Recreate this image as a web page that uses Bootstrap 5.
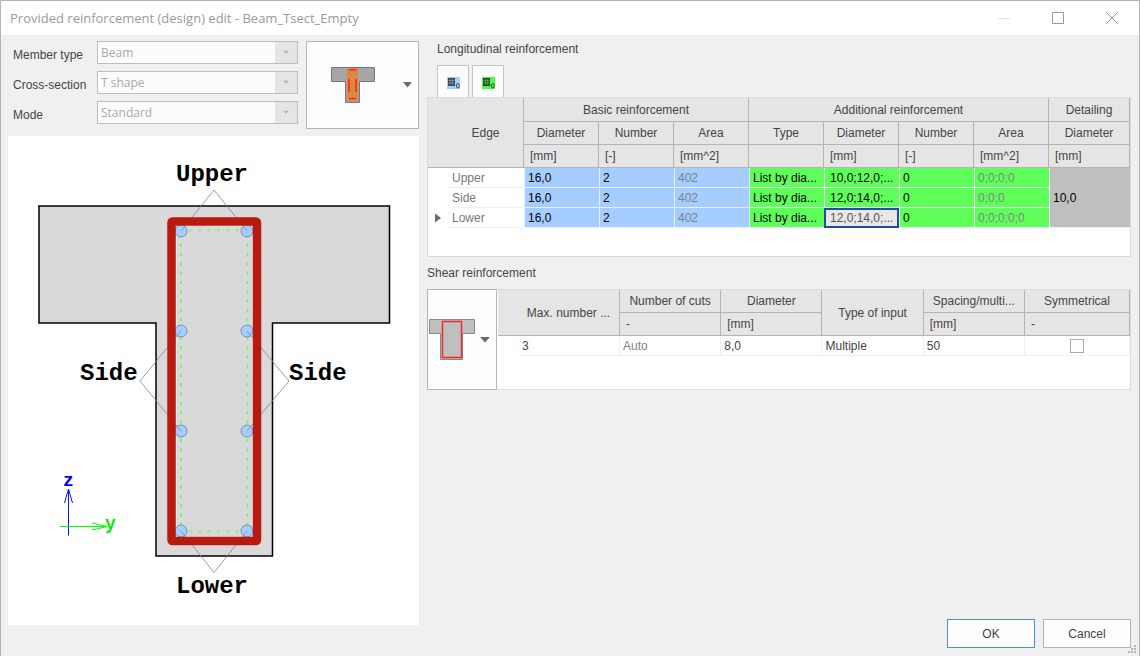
<!DOCTYPE html>
<html lang="en">
<head>
<meta charset="utf-8">
<meta name="viewport" content="width=device-width, initial-scale=1">
<title>Provided reinforcement (design) edit</title>
<link href="https://cdn.jsdelivr.net/npm/bootstrap@5.3.0/dist/css/bootstrap.min.css" rel="stylesheet">
<style>
  body { font: 12px/16px "Liberation Sans", Arial, sans-serif; color: #454545; background: #f0f0f0; }
  .dialog-window { border: 1px solid #b4b4b4; border-bottom: 0; }
  .title-bar { height: 34px; padding-left: 9px; padding-right: 20px; color: #9a9a9a; }
  .title-bar h1 { font: 13px/18px "Open Sans", sans-serif; }
  .caption-buttons { gap: 40px; }
  .caption-buttons button { border: 0; padding: 0; background: none; line-height: 0; }
  .dialog-body { display: grid; grid-template-columns: minmax(0, 411fr) minmax(0, 704fr); gap: 8px; padding: 6px 8px 8px 7px; }
  .settings-fields { display: grid; grid-template-columns: 85px minmax(0, 1fr); row-gap: 7px; align-content: start; }
  .settings-fields label { padding: 6px 0 0 5px; white-space: nowrap; }
  .combo { height: 23px; padding: 0 24px 0 3px; border: 1px solid #bdbdbd; border-radius: 0; color: #a9a9a9;
    font: 12px/20px "Open Sans", sans-serif;
    background: #fcfcfc url("data:image/svg+xml,%3Csvg xmlns='http://www.w3.org/2000/svg' viewBox='0 0 22 22'%3E%3Cpath fill='%23e5e5e5' d='M0 0h22v22H0z'/%3E%3Cpath fill='%23b5b5b5' d='M8 9h6l-3 3z'/%3E%3C/svg%3E") no-repeat right 0 center / 22px 22px; }
  .combo:disabled { background-color: #fcfcfc; opacity: 1; }
  .picture-btn { border: 1px solid #b4b4b4; background: #fdfdfd; border-radius: 0; }
  .shape-btn { width: 113px; height: 88px; gap: 25px; padding: 0 5px 0 20px; }
  .stirrup-btn { width: 70px; height: 101px; gap: 4px; padding: 0 5px 0 1px; }
  .canvas { background: #fff; margin-top: 7px; }
  .canvas text { font-family: "Liberation Mono", "Courier New", monospace; font-weight: bold; font-size: 24px; }
  .canvas .axis-name { font-size: 18px; }
  .section-title { font: inherit; }
  .section-title.tabbed, .tab-row { padding-left: 10px; }
  .tab-row { gap: 3px; margin-top: 8px; }
  .tab-row button { width: 32px; height: 32px; border: 1px solid #c4c4c4; border-bottom: 0; background: #fcfcfc; padding: 2px 0 0; line-height: 0; }
  .panel-box { background: #fff; border: 1px solid #dcdcdc; }
  .bars-panel { height: 160px; }
  .shear-panel { height: 101px; }
  .shear-panel { border-left: 0; padding-left: 1px; }
  .data-grid { width: 100%; table-layout: fixed; border-collapse: separate; border-spacing: 0; white-space: nowrap; }
  .data-grid th, .data-grid td { overflow: hidden; font-weight: normal; }
  .data-grid thead th { height: 23px; background: #e5e5e5; border: 0 solid #b4b4b4; border-width: 0 1px 1px 0; padding: 0 5px; text-align: center; }
  .bars-grid thead tr:first-child th { height: 24px; }
  .data-grid thead .unit { text-align: left; padding-left: 6px; }
  .data-grid thead .row-head { padding-left: 25px; }
  .data-grid tbody th, .data-grid tbody td { height: 20px; padding: 0 2px 0 3px; color: #454545; }
  .bars-grid tbody td { border: 0 solid #e6f2f5; border-width: 0 0 1px 1px; color: #000; }
  .data-grid tbody th { color: #777; text-align: left; border-bottom: 1px solid #f0f0f0; }
  .data-grid tbody .marker { border: 0; padding: 0 0 0 6px; line-height: 0; }
  .shear-grid tbody td { border: 0 solid #f0f0f0; border-width: 0 1px 1px 0; }
  .data-grid tbody .basic { background: #a5cdff; }
  .data-grid tbody .extra { background: #5fff5a; }
  .data-grid tbody .basic:not(.computed), .data-grid tbody .extra:not(.computed), .data-grid tbody .detail { color: #000; }
  .data-grid tbody .computed { color: #7d8586; }
  .data-grid tbody .detail { background: #bfbfbf; }
  .data-grid tbody .inset { padding-left: 5px; }
  .data-grid tbody .active-cell { background: #e8e8e8; color: #555; border: 0; padding-left: 6px; outline: 2px solid #1f4fa5; outline-offset: -2px; }
  .col-marker { width: 21px; } .col-edge { width: 75px; } .col-detail { width: 81px; }
  .col-max { width: 101px; } .col-sym { width: 105px; }
  .sym-check { appearance: none; width: 14px; height: 14px; border: 1px solid #aaa; background: #fff; margin: 0; display: block; }
  .dialog-btn { width: 88px; height: 29px; border: 1px solid #b4b4b4; border-radius: 0; background: #fdfdfd; color: #454545; font-size: 12px; line-height: 16px; padding: 0; }
  .dialog-btn.default { border-color: #4a90d9; }
  .grip { position: absolute; right: 2px; bottom: 2px; }
</style>
</head>
<body>
<div class="dialog-window min-vh-100 d-flex flex-column position-relative">
  <header class="title-bar bg-white d-flex align-items-center justify-content-between">
    <h1 class="m-0">Provided reinforcement (design) edit - Beam_Tsect_Empty</h1>
    <div class="caption-buttons d-flex align-items-center">
      <button type="button" aria-label="Minimize"><svg width="14" height="14"><path d="M1 7.500h12" stroke="#e2e2e2"/></svg></button>
      <button type="button" aria-label="Maximize"><svg width="14" height="14"><path d="M1.500 1.500h11v11h-11z" fill="none" stroke="#999"/></svg></button>
      <button type="button" aria-label="Close"><svg width="14" height="14"><path d="M1 1l12 12M13 1L1 13" stroke="#999"/></svg></button>
    </div>
  </header>

  <main class="dialog-body flex-grow-1">
    <section class="d-flex flex-column">
      <div class="d-flex gap-2">
        <div class="settings-fields flex-grow-1">
          <label for="member">Member type</label>
          <select id="member" class="form-select combo ms-1 w-auto" disabled><option>Beam</option></select>
          <label for="section">Cross-section</label>
          <select id="section" class="form-select combo ms-1 w-auto" disabled><option>T shape</option></select>
          <label for="mode">Mode</label>
          <select id="mode" class="form-select combo ms-1 w-auto" disabled><option>Standard</option></select>
        </div>
        <button type="button" class="picture-btn shape-btn d-flex align-items-center justify-content-end" aria-label="Section shape">
          <svg width="48" height="40" viewBox="0 0 48 40">
            <path d="M2.500 2.500h43v14h-15v21h-14v-21h-14z" fill="#a6a6a6" stroke="#777"/>
            <path d="M18 3h11v33h-11z" fill="#dd8747"/>
            <path d="M20 5h7M20 33.500h7M20 14v13M27 14v13" stroke="#ff2815" stroke-width="1.500"/>
          </svg>
          <svg width="11" height="6"><path d="M1 0h9L5.500 5.500z" fill="#6b6b6b"/></svg>
        </button>
      </div>
      <div class="canvas">
        <svg class="d-block w-100" viewBox="0 0 411 489" role="img" aria-label="T section with reinforcement">
          <path d="M31 70h350.500v117H264.500v233H148V187H31z" fill="#d9d9d9" stroke="#000" stroke-width="1.500"/>
          <rect x="168.500" y="90" width="76" height="311" fill="none" stroke="#eee"/>
          <path d="M173 94.500V395M239.500 94.500V395" stroke="#6cfb62" stroke-width="2" stroke-dasharray="3 6.300" stroke-dashoffset="-4"/>
          <path d="M173 94.500h66.500M173 395.500h66.500" stroke="#6cfb62" stroke-width="1.500" stroke-dasharray="3 6.300" stroke-dashoffset="-8"/>
          <g fill="#a5cdff" stroke="#5f7fa5" stroke-width="0.800">
            <circle cx="173" cy="95" r="6"/><circle cx="239" cy="95" r="6"/>
            <circle cx="173" cy="195" r="6"/><circle cx="239" cy="195" r="6"/>
            <circle cx="173" cy="295" r="6"/><circle cx="239" cy="295" r="6"/>
            <circle cx="173" cy="395" r="6"/><circle cx="239" cy="395" r="6"/>
          </g>
          <path d="M173 95l33-41 33 41M173 195l-41 50 41 50M239 195l42 50-42 50M173 395l33 41.500 33-41.500" fill="none" stroke="#7289a5" stroke-width="0.800"/>
          <rect x="163.500" y="85.500" width="85.500" height="319.500" rx="1" fill="none" stroke="#b91a10" stroke-width="8.500" stroke-linejoin="round"/>
          <text x="168" y="45">Upper</text>
          <text x="72" y="244">Side</text>
          <text x="281" y="244">Side</text>
          <text x="168" y="457">Lower</text>
          <path d="M60.500 399.500V353M56.500 367l4-14 4 14" fill="none" stroke="#1010ff"/>
          <path d="M52 390.500h47M84 387l15 3.500-15 3.500" fill="none" stroke="#00ff00"/>
          <text class="axis-name" x="55" y="350" fill="#0000ee">z</text>
          <text class="axis-name" x="97" y="393" fill="#00ee00">y</text>
        </svg>
      </div>
    </section>

    <section class="d-flex flex-column">
      <h2 class="section-title tabbed m-0">Longitudinal reinforcement</h2>
      <div class="tab-row d-flex">
        <button type="button" aria-label="Clear basic reinforcement"><svg width="13" height="12" viewBox="0 0 13 12"><path d="M0 0h13v12H0z" fill="#a5cdff"/><path d="M1 1h7v8H1z" fill="#3f4650"/><path d="M3.300 2v6M5.700 2v6M1.500 3.500h6M1.500 6h6" stroke="#8fa5c4" stroke-width=".6"/><ellipse cx="10.800" cy="8.800" rx="1.500" ry="2.200" fill="none" stroke="#3f4650"/></svg></button>
        <button type="button" aria-label="Clear additional reinforcement"><svg width="13" height="12" viewBox="0 0 13 12"><path d="M0 0h13v12H0z" fill="#4dfa45"/><path d="M1 1h7v8H1z" fill="#2b4a2b"/><path d="M3.300 2v6M5.700 2v6M1.500 3.500h6M1.500 6h6" stroke="#5fc45f" stroke-width=".6"/><ellipse cx="10.800" cy="8.800" rx="1.500" ry="2.200" fill="none" stroke="#2b4a2b"/></svg></button>
      </div>
      <div class="panel-box bars-panel">
        <table class="data-grid bars-grid">
          <colgroup><col class="col-marker"><col class="col-edge"><col span="7"><col class="col-detail"></colgroup>
          <thead>
            <tr><th rowspan="3" colspan="2" class="row-head">Edge</th><th colspan="3">Basic reinforcement</th><th colspan="4">Additional reinforcement</th><th>Detailing</th></tr>
            <tr><th>Diameter</th><th>Number</th><th>Area</th><th>Type</th><th>Diameter</th><th>Number</th><th>Area</th><th>Diameter</th></tr>
            <tr><th class="unit">[mm]</th><th class="unit">[-]</th><th class="unit">[mm^2]</th><th></th><th class="unit">[mm]</th><th class="unit">[-]</th><th class="unit">[mm^2]</th><th class="unit">[mm]</th></tr>
          </thead>
          <tbody>
            <tr><td class="marker"></td><th>Upper</th><td class="basic">16,0</td><td class="basic">2</td><td class="basic computed">402</td><td class="extra">List by dia...</td><td class="extra inset">10,0;12,0;...</td><td class="extra">0</td><td class="extra computed">0;0;0;0</td><td class="detail" rowspan="3">10,0</td></tr>
            <tr><td class="marker"></td><th>Side</th><td class="basic">16,0</td><td class="basic">2</td><td class="basic computed">402</td><td class="extra">List by dia...</td><td class="extra inset">12,0;14,0;...</td><td class="extra">0</td><td class="extra computed">0;0;0</td></tr>
            <tr><td class="marker"><svg width="8" height="10"><path d="M1 0.500v9L7 5z" fill="#6b6b6b"/></svg></td><th>Lower</th><td class="basic">16,0</td><td class="basic">2</td><td class="basic computed">402</td><td class="extra">List by dia...</td><td class="active-cell">12,0;14,0;...</td><td class="extra">0</td><td class="extra computed">0;0;0;0;0</td></tr>
          </tbody>
        </table>
      </div>

      <h2 class="section-title mt-2 mb-2">Shear reinforcement</h2>
      <div class="d-flex">
        <button type="button" class="picture-btn stirrup-btn d-flex align-items-center flex-shrink-0" aria-label="Stirrup shape">
          <svg width="47" height="43" viewBox="0 0 47 43">
            <path d="M.5 1.500h45v14h-12v26h-22v-26h-11z" fill="#bfbfbf" stroke="#888"/>
            <path d="M13.500 3.500h19v36h-19z" fill="none" stroke="#f02828" stroke-width="1.500"/>
          </svg>
          <svg width="10" height="6"><path d="M0 0h10L5 5.500z" fill="#6b6b6b"/></svg>
        </button>
        <div class="panel-box shear-panel flex-grow-1">
          <table class="data-grid shear-grid">
            <colgroup><col class="col-marker"><col class="col-max"><col span="4"><col class="col-sym"></colgroup>
            <thead>
              <tr><th rowspan="2" colspan="2" class="row-head">Max. number ...</th><th>Number of cuts</th><th>Diameter</th><th rowspan="2">Type of input</th><th>Spacing/multi...</th><th>Symmetrical</th></tr>
              <tr><th class="unit">-</th><th class="unit">[mm]</th><th class="unit">[mm]</th><th class="unit">-</th></tr>
            </thead>
            <tbody>
              <tr><td class="marker"></td><td>3</td><td class="computed">Auto</td><td>8,0</td><td>Multiple</td><td>50</td><td><input type="checkbox" class="sym-check mx-auto" aria-label="Symmetrical"></td></tr>
            </tbody>
          </table>
        </div>
      </div>

      <div class="d-flex justify-content-end gap-2 mt-auto">
        <button type="button" class="btn dialog-btn default">OK</button>
        <button type="button" class="btn dialog-btn">Cancel</button>
      </div>
    </section>
  </main>
  <svg class="grip" width="9" height="9" fill="#b4b4b4"><path d="M6 0h2v2H6zM3 3h2v2H3zM6 3h2v2H6zM0 6h2v2H0zM3 6h2v2H3zM6 6h2v2H6z"/></svg>
</div>
<script src="https://cdn.jsdelivr.net/npm/bootstrap@5.3.0/dist/js/bootstrap.bundle.min.js"></script>
</body>
</html>
